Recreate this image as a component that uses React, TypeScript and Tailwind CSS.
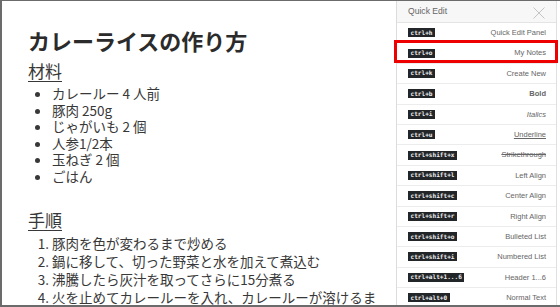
import React from 'react'

const ingredients: string[] = ["カレールー 4 人前", "豚肉 250g", "じゃがいも 2 個", "人参1/2本", "玉ねぎ 2 個", "ごはん"];

const steps: string[] = [
  "豚肉を色が変わるまで炒める",
  "鍋に移して、切った野菜と水を加えて煮込む",
  "沸騰したら灰汁を取ってさらに15分煮る",
  "火を止めてカレールーを入れ、カレールーが溶けるまで混ぜる",
];

interface Shortcut {
  keys: string;
  label: string;
  style?: string;
}

const shortcuts: Shortcut[] = [
  { keys: "ctrl+h", label: "Quick Edit Panel" },
  { keys: "ctrl+o", label: "My Notes" },
  { keys: "ctrl+k", label: "Create New" },
  { keys: "ctrl+b", label: "Bold", style: "font-bold text-[#333]" },
  { keys: "ctrl+i", label: "Italics", style: "italic" },
  { keys: "ctrl+u", label: "Underline", style: "underline" },
  { keys: "ctrl+shift+x", label: "Strikethrough", style: "line-through" },
  { keys: "ctrl+shift+l", label: "Left Align" },
  { keys: "ctrl+shift+c", label: "Center Align" },
  { keys: "ctrl+shift+r", label: "Right Align" },
  { keys: "ctrl+shift+o", label: "Bulleted List" },
  { keys: "ctrl+shift+i", label: "Numbered List" },
  { keys: "ctrl+alt+1...6", label: "Header 1...6" },
  { keys: "ctrl+alt+0", label: "Normal Text" },
];

const jp = "font-['Noto_Sans_CJK_JP','Noto_Sans',sans-serif]";

const App: React.FC = () => {
  return (
    <div className={`w-[560px] h-[307px] overflow-hidden bg-white border-l-2 border-t border-b-2 border-[#6b6b6b] flex ${jp}`}>
      {/* note body */}
      <div className="flex-1 pl-[26px] pt-[24px] text-[#383838] overflow-hidden">
        <h1 className="text-[22px] font-bold leading-[30px] text-[#2b2b2b]">カレーライスの作り方</h1>
        <h2 className="text-[17px] leading-[24px] underline underline-offset-[3px] mt-[4px]">材料</h2>
        <ul className="mt-[2px] pl-[24px] list-disc text-[13.5px] leading-[16.6px]">
          {ingredients.map((item) => (
            <li key={item}>{item}</li>
          ))}
        </ul>
        <h2 className="text-[17px] leading-[24px] underline underline-offset-[3px] mt-[23px]">手順</h2>
        <ol className="mt-[2px] pl-[24px] list-decimal text-[13.5px] leading-[18px] w-[352px]">
          {steps.map((step) => (
            <li key={step}>{step}</li>
          ))}
        </ol>
      </div>

      {/* quick edit panel */}
      <div className="relative w-[164px] shrink-0 border-l border-[#dcdcdc] bg-white pr-[3px] font-['Liberation_Sans',sans-serif]">
        <div className="border-r border-[#e0e0e0] h-full">
          <div className="h-[22px] flex items-center justify-between pl-[11px] pr-[11px] bg-[#f7f7f7] border-b border-[#e4e4e4]">
            <span className="text-[8.6px] text-[#666]">Quick Edit</span>
            <svg width="12" height="12" viewBox="0 0 12 12" className="mt-[2px]">
              <path d="M0.5 0.5 L11.5 11.5 M11.5 0.5 L0.5 11.5" stroke="#c4c4c4" strokeWidth="1" fill="none" />
            </svg>
          </div>
          {shortcuts.map((s) => (
            <div key={s.keys} className="h-[20.4px] flex items-center justify-between pl-[11px] pr-[10px] border-b border-[#ececec]">
              <kbd className="bg-[#232629] text-[#f0f0f0] font-['DejaVu_Sans_Mono',monospace] text-[6.1px] leading-[8px] px-[2.5px] py-[0.5px] font-bold">
                {s.keys}
              </kbd>
              <span className={`text-[7.5px] text-[#666] ${s.style ?? ""}`}>{s.label}</span>
            </div>
          ))}
        </div>
        {/* red highlight annotation */}
        <div className="absolute left-[-3px] top-[39px] w-[164px] h-[23px] border-[3px] border-[#ee0000]" />
      </div>
    </div>
  )
}

export default App
